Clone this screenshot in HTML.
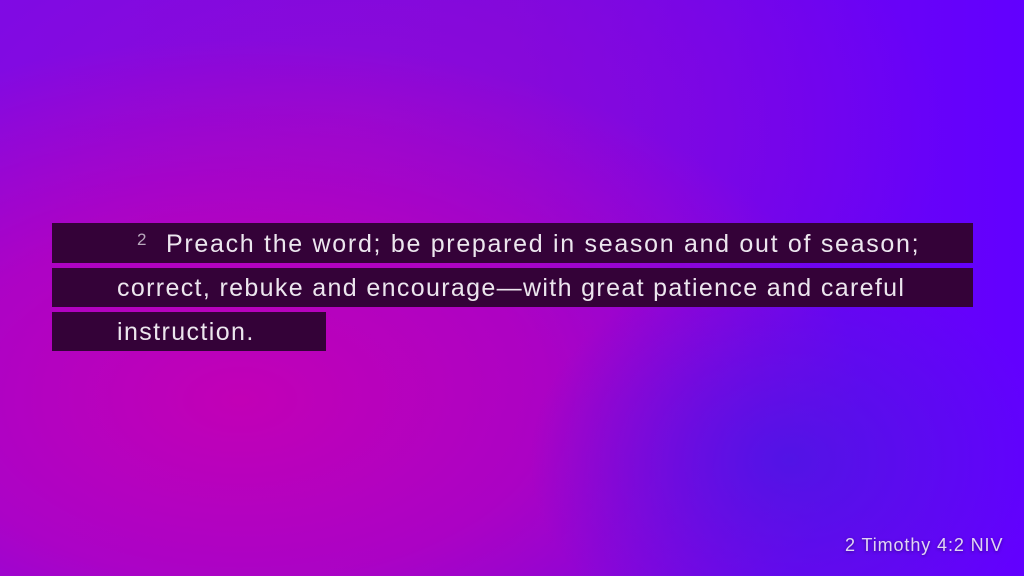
<!DOCTYPE html>
<html><head><meta charset="utf-8"><style>
html,body{margin:0;padding:0;}
body{width:1024px;height:576px;overflow:hidden;position:relative;font-family:"Liberation Sans",sans-serif;
background:
radial-gradient(ellipse 260px 200px at 790px 460px, rgba(80,20,230,0.95), rgba(80,20,230,0) 100%),
radial-gradient(ellipse 620px 360px at 240px 400px, #c200b6 0%, rgba(192,0,184,0.7) 50%, rgba(190,0,190,0) 100%),
radial-gradient(ellipse 600px 300px at 350px 130px, rgba(150,10,210,0.7), rgba(150,10,210,0) 100%),
linear-gradient(90deg,#7a0ae8 0%,#7a08e0 50%,#6200ff 100%);}
.box{position:absolute;background:#340238;}
.t{position:absolute;color:#ece6ee;font-size:25px;white-space:nowrap;line-height:30px;}
</style></head><body>
<div class="box" style="left:52px;top:223px;width:921px;height:40px"></div>
<div class="box" style="left:52px;top:268px;width:921px;height:39px"></div>
<div class="box" style="left:52px;top:312px;width:274px;height:39px"></div>
<div class="t" style="left:137px;top:225px;font-size:17px;color:#b8a8bc">2</div>
<div class="t" style="left:166px;top:229px;letter-spacing:1.7px">Preach the word; be prepared in season and out of season;</div>
<div class="t" style="left:117px;top:273px;letter-spacing:1.35px">correct, rebuke and encourage—with great patience and careful</div>
<div class="t" style="left:117px;top:317px;letter-spacing:1.4px">instruction.</div>
<div class="t" style="left:845px;top:530px;font-size:18px;letter-spacing:0.9px;color:#e0d4f4;text-shadow:0 1px 3px rgba(0,0,0,0.4)">2 Timothy 4:2 NIV</div>
</body></html>
